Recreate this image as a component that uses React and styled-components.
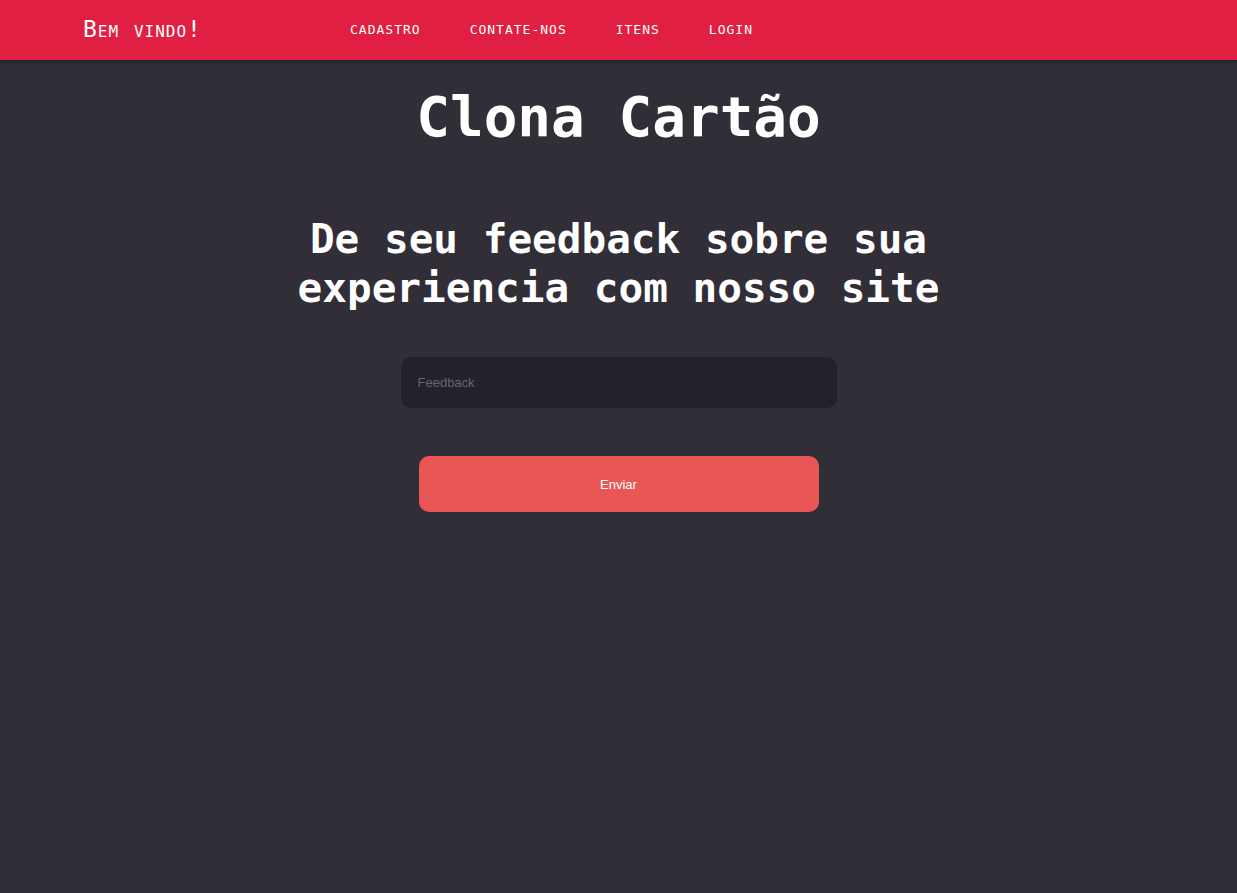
import styled, { createGlobalStyle } from 'styled-components'

const GlobalStyle = createGlobalStyle`
  body {
    margin: 0;
    background: #312e38;
    font-family: "DejaVu Sans Mono", "Liberation Mono", monospace;
    color: #ffffff;
  }
`

const Page = styled.div`
  min-height: 893px;
  display: flex;
  flex-direction: column;
`

const NavBar = styled.header`
  height: 60px;
  background: #e01f42;
  box-shadow: 0 2px 4px rgba(0, 0, 0, 0.35);
  display: flex;
  align-items: center;
  padding: 0 0 0 83px;
`

const Brand = styled.h2`
  margin: 0 0 2px;
  width: 267px;
  font-size: 23px;
  font-weight: 400;
  font-variant: small-caps;
  letter-spacing: 1px;
  color: #fff;
`

const NavLinks = styled.nav`
  display: flex;
  gap: 49px;
  margin-bottom: 1px;
`

const NavLink = styled.a`
  font-size: 13px;
  letter-spacing: 1px;
  color: #fff;
  text-decoration: none;
  text-transform: uppercase;
  cursor: pointer;
`

const Main = styled.main`
  display: flex;
  flex-direction: column;
  align-items: center;
`

const Title = styled.h1`
  margin: 24px 0 0;
  font-size: 56px;
  line-height: 66px;
  font-weight: 700;
`

const Subtitle = styled.h2`
  margin: 65px 0 0;
  max-width: 660px;
  text-align: center;
  font-size: 41px;
  line-height: 49px;
  font-weight: 700;
`

const Form = styled.form`
  margin-top: 44px;
  display: flex;
  flex-direction: column;
  align-items: center;
  gap: 48px;
`

const Input = styled.input`
  box-sizing: border-box;
  width: 436px;
  height: 51px;
  border: none;
  border-radius: 10px;
  background: #23212b;
  padding: 0 17px;
  font-family: "Liberation Sans", Arial, sans-serif;
  font-size: 13px;
  color: #fff;
  outline: none;

  &::placeholder {
    color: #66686a;
  }
`

const Button = styled.button`
  width: 400px;
  height: 56px;
  border: none;
  border-radius: 10px;
  background: #e95656;
  color: #fff;
  font-family: "Liberation Sans", Arial, sans-serif;
  font-size: 13px;
  cursor: pointer;
`

const links = ['Cadastro', 'Contate-nos', 'Itens', 'Login']

export default function App() {
  return (
    <Page>
      <GlobalStyle />
      <NavBar>
        <Brand>Bem vindo!</Brand>
        <NavLinks>
          {links.map((l) => (
            <NavLink key={l}>{l}</NavLink>
          ))}
        </NavLinks>
      </NavBar>
      <Main>
        <Title>Clona Cartão</Title>
        <Subtitle>De seu feedback sobre sua experiencia com nosso site</Subtitle>
        <Form onSubmit={(e) => e.preventDefault()}>
          <Input placeholder="Feedback" />
          <Button type="submit">Enviar</Button>
        </Form>
      </Main>
    </Page>
  )
}
